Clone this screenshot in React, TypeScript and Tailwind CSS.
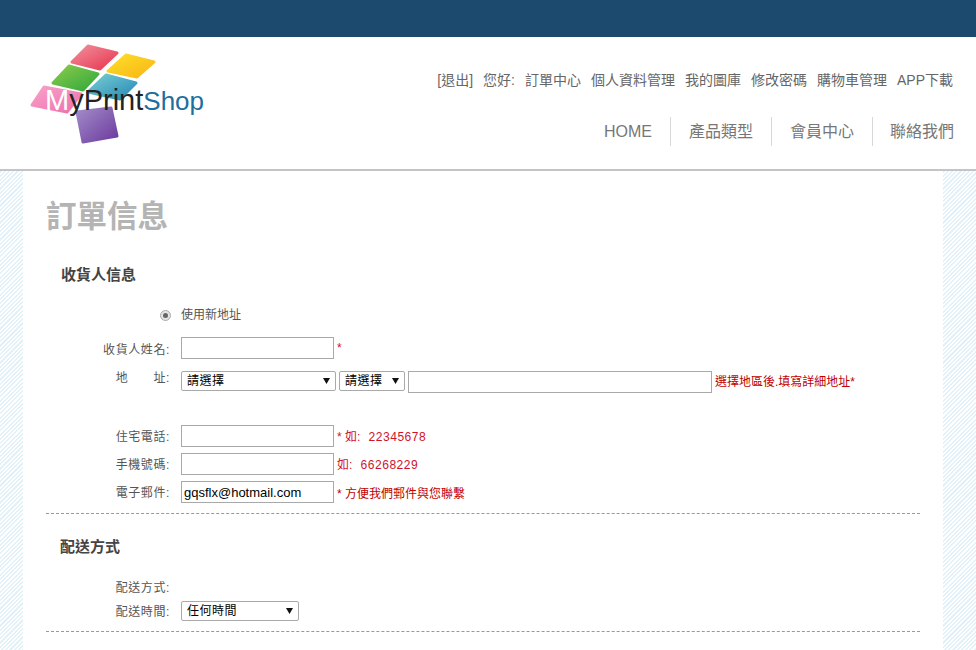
const stripes =
  "bg-[repeating-linear-gradient(135deg,#e2f2f8_0,#e2f2f8_1.5px,#ffffff_1.5px,#ffffff_3px)]";

function Logo() {
  return (
    <svg width="190" height="112" viewBox="25 38 190 112" className="block">
      <defs>
        <linearGradient id="red" x1="0" y1="0" x2="1" y2="1">
          <stop offset="0" stopColor="#f0909c" />
          <stop offset="1" stopColor="#e8344f" />
        </linearGradient>
        <linearGradient id="yellow" x1="0" y1="0" x2="1" y2="1">
          <stop offset="0" stopColor="#fbe02a" />
          <stop offset="1" stopColor="#fbb414" />
        </linearGradient>
        <linearGradient id="green" x1="0" y1="0" x2="1" y2="1">
          <stop offset="0" stopColor="#8ccb4a" />
          <stop offset="1" stopColor="#2fa83c" />
        </linearGradient>
        <linearGradient id="teal" x1="0" y1="0" x2="1" y2="1">
          <stop offset="0" stopColor="#79ced2" />
          <stop offset="1" stopColor="#2488b8" />
        </linearGradient>
        <linearGradient id="pink" x1="0" y1="0" x2="1" y2="1">
          <stop offset="0" stopColor="#f7a3c8" />
          <stop offset="1" stopColor="#ee6fae" />
        </linearGradient>
        <linearGradient id="purple" x1="0" y1="0" x2="1" y2="1">
          <stop offset="0" stopColor="#a28cc8" />
          <stop offset="1" stopColor="#6c3a9e" />
        </linearGradient>
      </defs>
      <g strokeWidth="3" strokeLinejoin="round">
        <polygon points="88,46 117,53 100,69 72,62" fill="url(#red)" stroke="url(#red)" />
        <polygon points="126,55 154,62 137,77 108,71" fill="url(#yellow)" stroke="url(#yellow)" />
        <polygon points="69,66 98,74 83,90 53,83" fill="url(#green)" stroke="url(#green)" />
        <polygon points="106,75 136,83 120,99 88,92" fill="url(#teal)" stroke="url(#teal)" />
        <polygon points="44,87 81,94 67,112 32,105" fill="url(#pink)" stroke="url(#pink)" />
        <polygon points="77,112 111,108 117,136 83,142" fill="url(#purple)" stroke="url(#purple)" />
      </g>
      <text x="45" y="110" fontSize="29" fontFamily="'Liberation Sans', sans-serif">
        <tspan fill="#ffffff">M</tspan>
        <tspan fill="#222222">yPrint</tspan>
        <tspan fill="#1d6f9e" fontSize="26">Shop</tspan>
      </text>
    </svg>
  );
}

function SelectBox({ text, width }: { text: string; width: string }) {
  return (
    <div className={`relative h-5 ${width}`}>
      <select className="block h-full w-full appearance-none rounded-[2px] border border-[#a9a9a9] bg-white pl-[5px] text-[12px] tracking-[0.5px] text-black outline-none">
        <option>{text}</option>
      </select>
      <svg
        width="7"
        height="6"
        viewBox="0 0 7 6"
        className="pointer-events-none absolute right-[6px] top-[7px]"
      >
        <polygon points="0,0 7,0 3.5,6" fill="#111111" />
      </svg>
    </div>
  );
}

function TextBox({ width = "w-[153px]", value }: { width?: string; value?: string }) {
  return (
    <input
      readOnly
      value={value ?? ""}
      className={`box-border h-[22px] ${width} border border-[#a9a9a9] bg-white px-[2px] text-[13px] text-black outline-none`}
    />
  );
}

function Row({
  label,
  height,
  className = "",
  labelClass = "pt-[2px]",
  children,
}: {
  label: string;
  height: string;
  className?: string;
  labelClass?: string;
  children?: React.ReactNode;
}) {
  return (
    <div className={`flex items-center ${height} ${className}`}>
      <div className={`w-[124px] whitespace-pre text-right text-[12px] tracking-[0.6px] text-[#555] ${labelClass}`}>
        {label}
      </div>
      <div className="ml-[11px] flex items-center">{children}</div>
    </div>
  );
}

export default function App() {
  return (
    <div className="flex h-[650px] flex-col overflow-hidden bg-white [font-family:'Liberation_Sans','Noto_Sans_CJK_TC',sans-serif]">
      <div className="h-[37px] bg-[#1c4a6e]" />

      {/* Header */}
      <header className="flex h-[134px] justify-between border-b-2 border-[#c4c4c4]">
        <div className="pl-[25px] pt-[1px]">
          <Logo />
        </div>
        <div className="flex flex-col items-end">
          <div className="mr-[23px] mt-[33px] flex gap-[10px] text-[14px] leading-5 text-[#666]">
            <span>[退出]</span>
            <span>您好:</span>
            <span>訂單中心</span>
            <span>個人資料管理</span>
            <span>我的圖庫</span>
            <span>修改密碼</span>
            <span>購物車管理</span>
            <span>APP下載</span>
          </div>
          <nav className="mr-[22px] mt-[27px] flex h-[29px] text-[16px] leading-[29px] text-[#777]">
            <span className="pr-[18px]">HOME</span>
            <span className="border-l border-[#d8d8d8] px-[18px]">產品類型</span>
            <span className="border-l border-[#d8d8d8] px-[18px]">會員中心</span>
            <span className="border-l border-[#d8d8d8] pl-[17px]">聯絡我們</span>
          </nav>
        </div>
      </header>

      {/* Body */}
      <div className="flex flex-1">
        <div className={`w-[23px] ${stripes}`} />
        <main className="flex-1 px-[23px]">
          <h1 className="mt-[25px] text-[30.5px] font-bold leading-10 text-[#b4b4b4]">訂單信息</h1>

          <h2 className="ml-[15px] mt-[29px] text-[15px] font-bold leading-5 text-[#444]">收貨人信息</h2>

          <div className="mt-[20px] flex h-5 items-center pl-[114px] text-[12px] text-[#555]">
            <span className="flex h-[11px] w-[11px] items-center justify-center rounded-full border border-[#aaa] bg-[#e4e4e4]">
              <span className="h-[5px] w-[5px] rounded-full bg-[#666]" />
            </span>
            <span className="ml-[10px]">使用新地址</span>
          </div>

          <Row label="收貨人姓名:" height="h-[22px]" className="mt-[12px]" labelClass="pt-[3px]">
            <TextBox />
            <span className="ml-[3px] text-[12px] text-[#d0112b]">*</span>
          </Row>

          <Row label="地　　址:" height="h-5" className="mt-[12px]" labelClass="pb-[7px]">
            <SelectBox text="請選擇" width="w-[155px]" />
            <div className="ml-[3px]">
              <SelectBox text="請選擇" width="w-[66px]" />
            </div>
            <div className="ml-[3px]">
              <TextBox width="w-[304px]" />
            </div>
            <span className="ml-[3px] pt-[2px] text-[12px] text-[#c00000]">選擇地區後.填寫詳細地址*</span>
          </Row>

          <Row label="住宅電話:" height="h-[22px]" className="mt-[34px]">
            <TextBox />
            <span className="ml-[3px] pt-[2px] text-[12px] text-[#d0112b]">
              * 如:
              <span className="ml-[8px] [font-family:'Liberation_Mono',monospace]">22345678</span>
            </span>
          </Row>

          <Row label="手機號碼:" height="h-[22px]" className="mt-[6px]">
            <TextBox />
            <span className="ml-[3px] pt-[2px] text-[12px] text-[#d0112b]">
              如:
              <span className="ml-[8px] [font-family:'Liberation_Mono',monospace]">66268229</span>
            </span>
          </Row>

          <Row label="電子郵件:" height="h-[22px]" className="mt-[6px]">
            <TextBox value="gqsflx@hotmail.com" />
            <span className="ml-[3px] pt-[3px] text-[12px] text-[#c00000]">* 方便我們郵件與您聯繫</span>
          </Row>

          <div className="mt-[10px] border-t border-dashed border-[#999]" />

          <h2 className="ml-[14px] mt-[23px] text-[15px] font-bold leading-5 text-[#444]">配送方式</h2>

          <Row label="配送方式:" height="h-5" className="mt-[21px]" labelClass="" />

          <Row label="配送時間:" height="h-5" className="mt-[3px]">
            <SelectBox text="任何時間" width="w-[118px]" />
          </Row>

          <div className="mt-[10px] border-t border-dashed border-[#999]" />
        </main>
        <div className={`w-[33px] ${stripes}`} />
      </div>
    </div>
  );
}
